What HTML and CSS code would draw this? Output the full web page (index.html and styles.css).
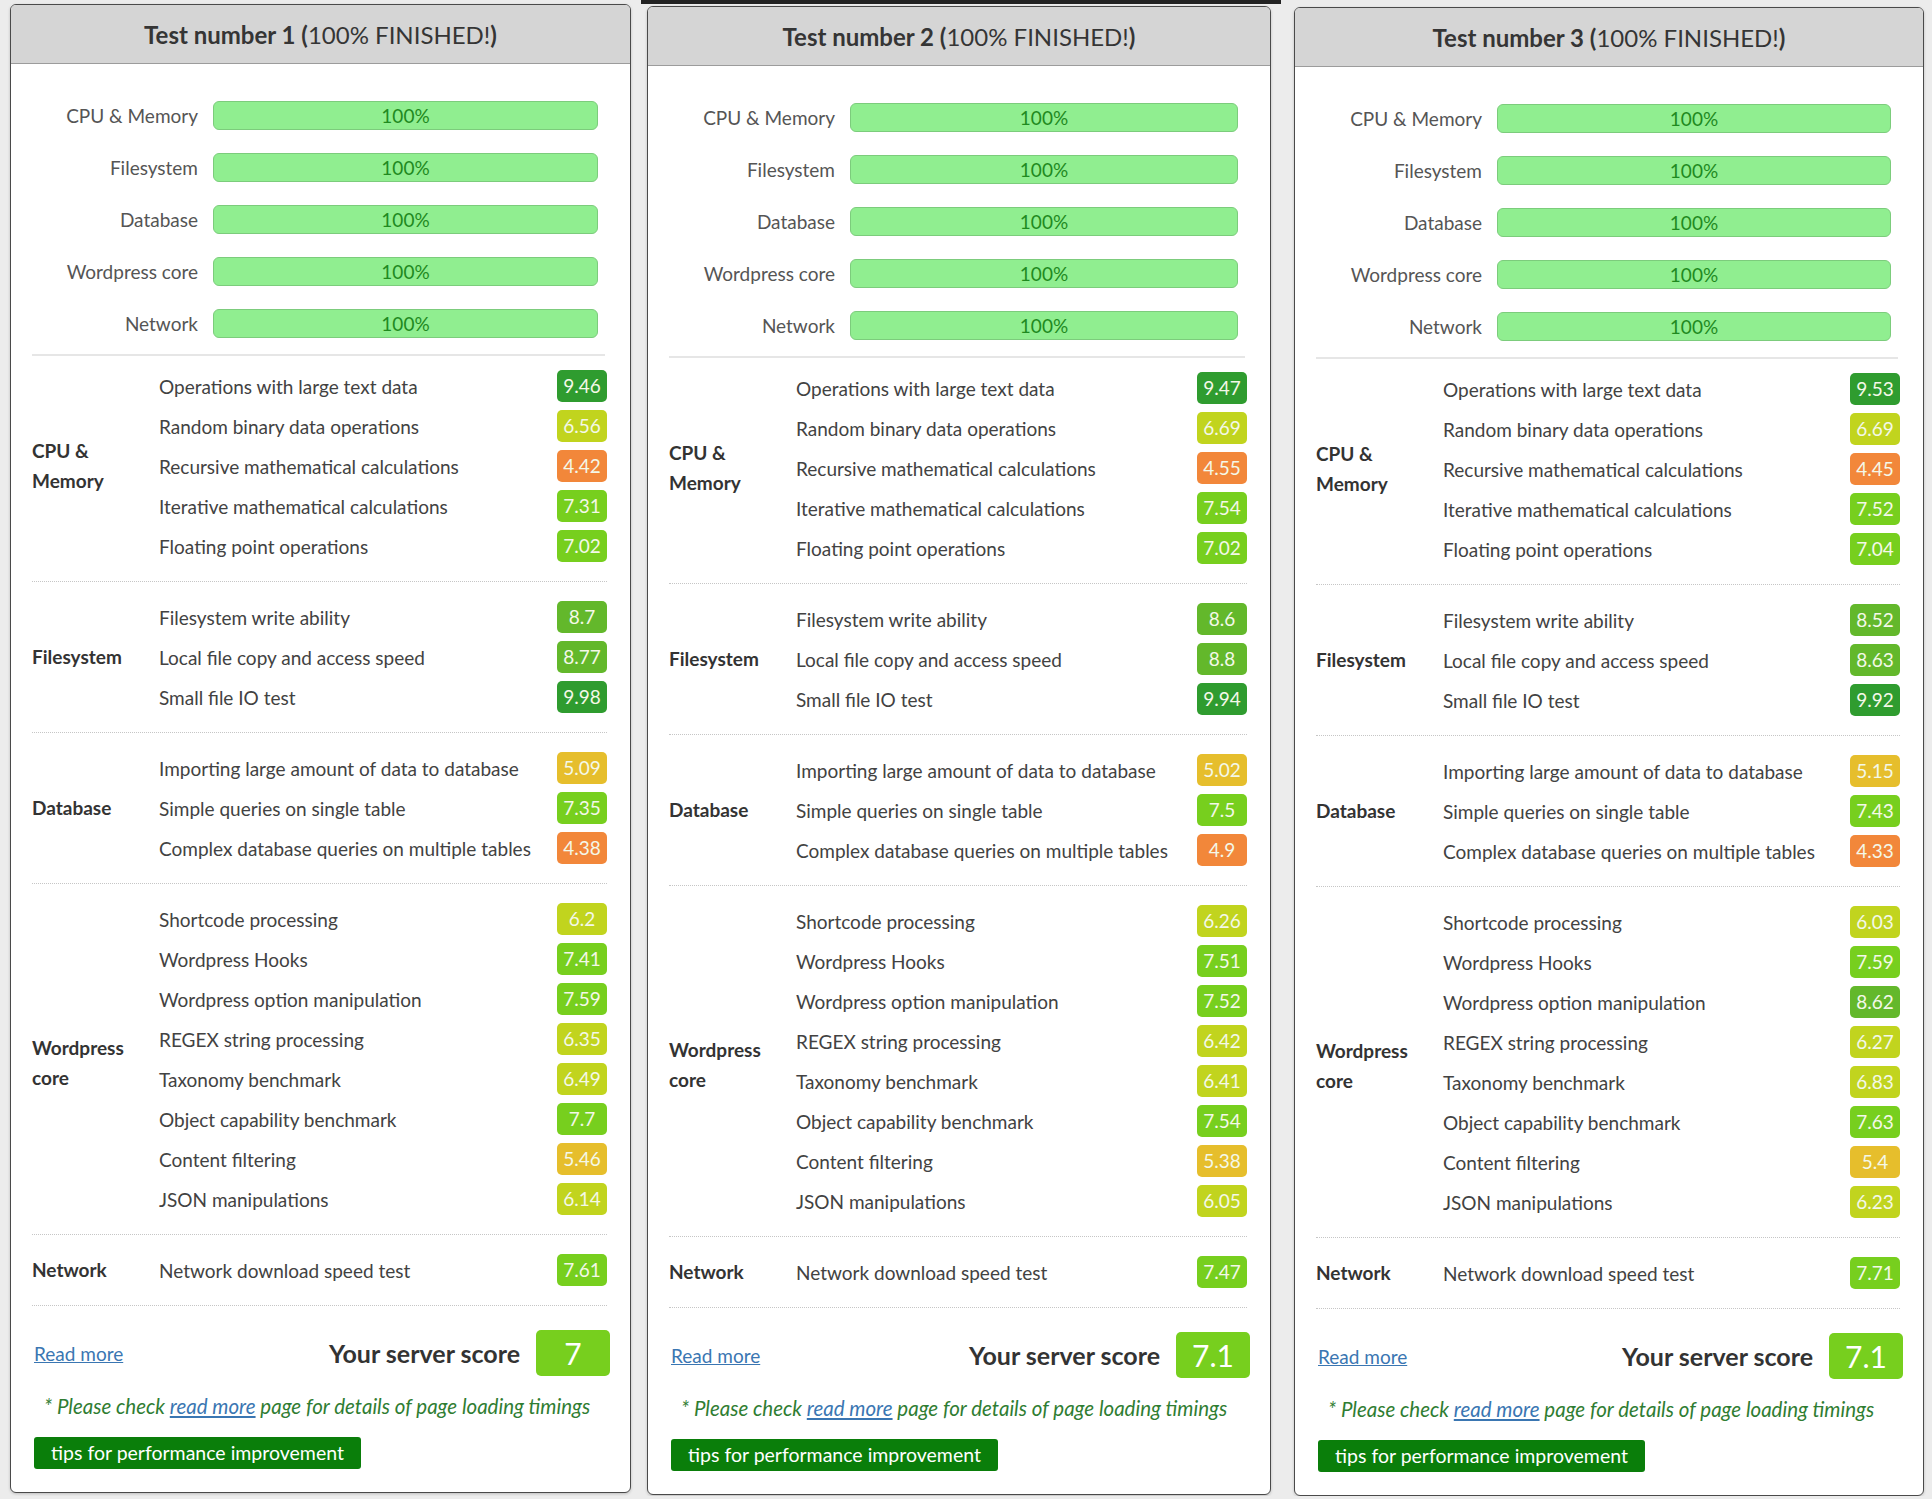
FILE: index.html
```html
<!DOCTYPE html>
<html lang="en">
<head>
    <meta charset="UTF-8">
    <meta name="viewport" content="width=device-width, initial-scale=1.0">
    <title>Server benchmark results</title>
    <link rel="stylesheet" href="styles.css">
</head>
<body>
    <div class="board">
        <div class="panel panel-first" id="test-1"></div>
        <div class="mid-column">
            <div class="top-strip"></div>
            <div class="panel panel-second" id="test-2"></div>
        </div>
        <div class="panel panel-third" id="test-3"></div>
    </div>

    <script>
        // Benchmark groups, in the order they are shown
        const GROUPS = [
            { name: 'CPU &amp; Memory', tests: [
                'Operations with large text data',
                'Random binary data operations',
                'Recursive mathematical calculations',
                'Iterative mathematical calculations',
                'Floating point operations'
            ] },
            { name: 'Filesystem', tests: [
                'Filesystem write ability',
                'Local file copy and access speed',
                'Small file IO test'
            ] },
            { name: 'Database', tests: [
                'Importing large amount of data to database',
                'Simple queries on single table',
                'Complex database queries on multiple tables'
            ] },
            { name: 'Wordpress core', lower: true, tests: [
                'Shortcode processing',
                'Wordpress Hooks',
                'Wordpress option manipulation',
                'REGEX string processing',
                'Taxonomy benchmark',
                'Object capability benchmark',
                'Content filtering',
                'JSON manipulations'
            ] },
            { name: 'Network', tests: [
                'Network download speed test'
            ] }
        ];

        // One entry per test run
        const RUNS = [
            { score: '7', values: [
                ['9.46', '6.56', '4.42', '7.31', '7.02'],
                ['8.7', '8.77', '9.98'],
                ['5.09', '7.35', '4.38'],
                ['6.2', '7.41', '7.59', '6.35', '6.49', '7.7', '5.46', '6.14'],
                ['7.61']
            ] },
            { score: '7.1', values: [
                ['9.47', '6.69', '4.55', '7.54', '7.02'],
                ['8.6', '8.8', '9.94'],
                ['5.02', '7.5', '4.9'],
                ['6.26', '7.51', '7.52', '6.42', '6.41', '7.54', '5.38', '6.05'],
                ['7.47']
            ] },
            { score: '7.1', values: [
                ['9.53', '6.69', '4.45', '7.52', '7.04'],
                ['8.52', '8.63', '9.92'],
                ['5.15', '7.43', '4.33'],
                ['6.03', '7.59', '8.62', '6.27', '6.83', '7.63', '5.4', '6.23'],
                ['7.71']
            ] }
        ];

        // Colour step for a score out of 10
        function level(value) {
            const v = parseFloat(value);
            if (v >= 9) return 'lvl-9';
            if (v >= 8) return 'lvl-8';
            if (v >= 7) return 'lvl-7';
            if (v >= 6) return 'lvl-6';
            if (v >= 5) return 'lvl-5';
            return 'lvl-4';
        }

        function renderPanel(el, num, run) {
            let html = `<h2 class="panel-header">Test number ${num} (<span class="status">100% FINISHED!</span>)</h2>`;

            html += `<div class="progress-list">`;
            GROUPS.forEach(group => {
                html += `<div class="bar-label">${group.name}</div><div class="bar">100%</div>`;
            });
            html += `</div>`;

            html += `<div class="results">`;
            GROUPS.forEach((group, g) => {
                html += `<div class="group">`;
                html += `<div class="group-label${group.lower ? ' lower' : ''}">${group.name}</div>`;
                html += `<div class="test-list">`;
                group.tests.forEach((test, t) => {
                    const value = run.values[g][t];
                    html += `<div class="test"><span class="test-name">${test}</span><span class="test-value ${level(value)}">${value}</span></div>`;
                });
                html += `</div></div>`;
            });
            html += `</div>`;

            html += `<div class="panel-footer">
                <div class="score-row">
                    <a href="#" class="read-more">Read more</a>
                    <div class="score">
                        <span class="score-label">Your server score</span>
                        <span class="score-value ${level(run.score)}">${run.score}</span>
                    </div>
                </div>
                <p class="note">* Please check <a href="#">read more</a> page for details of page loading timings</p>
                <a href="#" class="tips-button">tips for performance improvement</a>
            </div>`;

            el.innerHTML = html;
        }

        RUNS.forEach((run, i) => {
            renderPanel(document.getElementById('test-' + (i + 1)), i + 1, run);
        });
    </script>
</body>
</html>
```

FILE: styles.css
```css
* {
    box-sizing: border-box;
}
html, body {
    overflow: hidden;
}
body {
    margin: 0;
    background: #ececec;
    font-family: 'Lato', 'Liberation Sans', sans-serif;
    font-size: 19px;
    color: #424242;
}
.board {
    display: flex;
    align-items: flex-start;
    padding-left: 10px;
}
.panel {
    background: #fff;
    border: 1px solid #4a4a4a;
    border-radius: 6px;
    overflow: hidden;
    box-shadow: 0 1px 3px rgba(0, 0, 0, 0.2);
}
.panel-first {
    width: 621px;
    margin-top: 4px;
}
.mid-column {
    width: 640px;
    margin-left: 10px;
}
.top-strip {
    height: 4px;
    background: #232323;
}
.panel-second {
    width: 624px;
    margin: 2px 0 0 6px;
}
.panel-third {
    width: 630px;
    margin: 7px 0 0 13px;
}

/* header */
.panel-header {
    margin: 0;
    height: 59px;
    display: flex;
    align-items: center;
    justify-content: center;
    background: #d5d5d5;
    border-bottom: 1px solid #9c9c9c;
    font-size: 24px;
    font-weight: 700;
    color: #353535;
    white-space: pre;
}
.panel-header .status {
    font-weight: 400;
}

/* completion bars */
.progress-list {
    display: grid;
    grid-template-columns: 166px 1fr;
    column-gap: 15px;
    row-gap: 23px;
    margin: 0 25px 0 21px;
    padding: 37px 7px 16px 0;
    border-bottom: 2px solid #e6e6e6;
}
.bar-label {
    text-align: right;
    line-height: 29px;
    color: #555;
}
.bar {
    height: 29px;
    line-height: 27px;
    text-align: center;
    background: #90ee90;
    border: 1px solid #7ccc7c;
    border-radius: 6px;
    color: #1f8a1f;
}

/* per test scores */
.results {
    margin: 0 23px 0 21px;
}
.group {
    display: flex;
    padding: 15px 0;
    border-bottom: 1px dotted #c6c6c6;
}
.group:first-child {
    padding-top: 10px;
}
.group-label {
    flex-shrink: 0;
    width: 115px;
    margin-right: 12px;
    align-self: center;
    font-weight: 700;
    line-height: 30px;
    color: #333;
}
.group-label.lower {
    align-self: flex-start;
    margin-top: 134px;
}
.test-list {
    flex: 1;
}
.test {
    display: flex;
    align-items: center;
    justify-content: space-between;
    height: 40px;
}
.test-value {
    width: 50px;
    height: 32px;
    line-height: 32px;
    text-align: center;
    border-radius: 5px;
    color: #f4f8e8;
}
.lvl-9 { background: #2f9c2f; }
.lvl-8 { background: #63b82b; }
.lvl-7 { background: #77cf1e; }
.lvl-6 { background: #c1d41e; }
.lvl-5 { background: #e6be2c; }
.lvl-4 { background: #f2873a; }

/* footer */
.panel-footer {
    margin: 0 20px 0 23px;
    padding: 24px 0 23px;
}
.score-row {
    display: flex;
    align-items: center;
    justify-content: space-between;
}
.read-more {
    color: #3a76b2;
}
.score {
    display: flex;
    align-items: center;
    gap: 16px;
}
.score-label {
    font-size: 25px;
    font-weight: 700;
    color: #333;
}
.score-value {
    width: 74px;
    height: 46px;
    line-height: 46px;
    text-align: center;
    border-radius: 5px;
    font-size: 30px;
    color: #fff;
}
.note {
    margin: 18px 0 0 10px;
    line-height: 24px;
    font-size: 20.5px;
    font-style: italic;
    color: #2f7d32;
}
.note a {
    color: #3a76b2;
}
.tips-button {
    display: inline-block;
    margin-top: 19px;
    height: 32px;
    line-height: 32px;
    padding: 0 17px;
    background: #0a7e0a;
    color: #fff;
    font-size: 19.5px;
    border-radius: 3px;
    text-decoration: none;
}
```
